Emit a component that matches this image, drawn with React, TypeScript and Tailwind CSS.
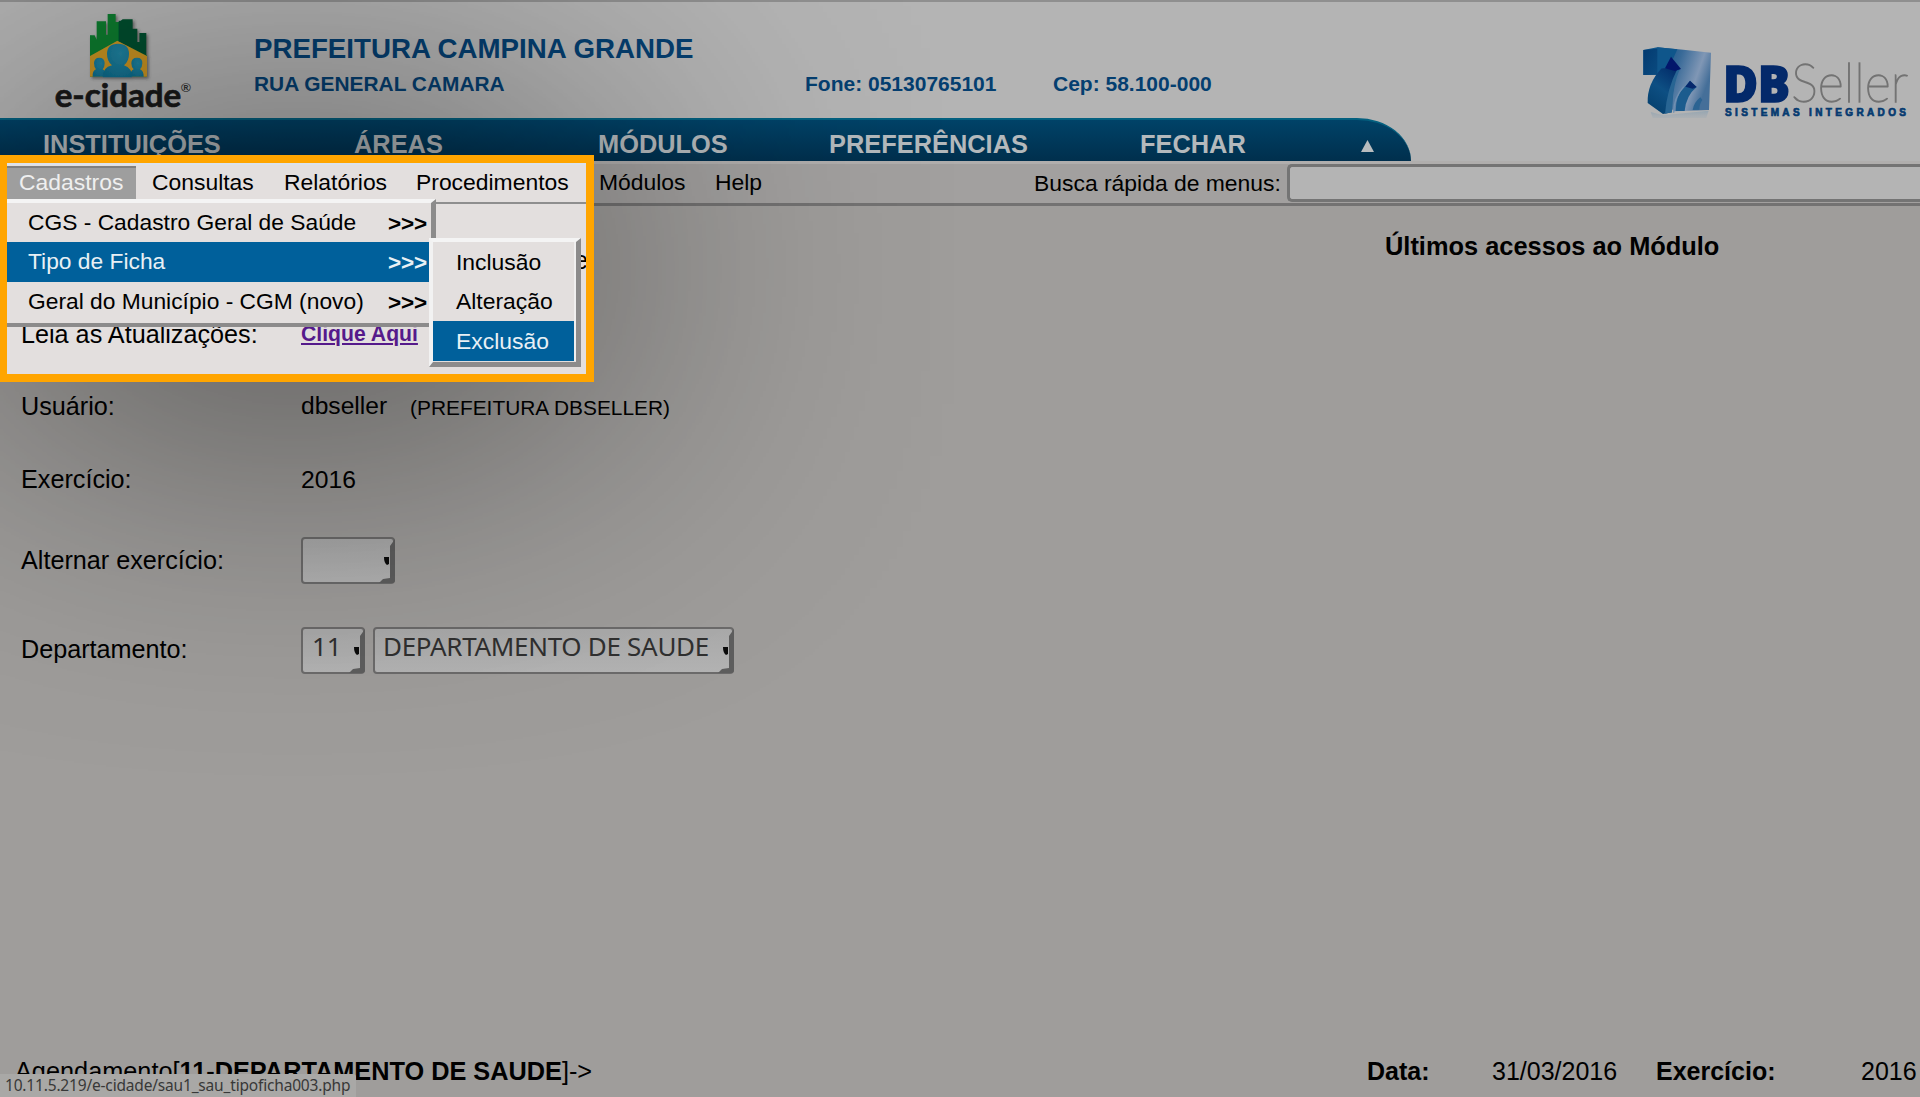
import React from "react";

function CityLogo() {
  return (
    <svg className="h-[118px] w-[170px] shrink-0" viewBox="0 0 510 354">
      <defs>
        <filter id="soft" x="-20%" y="-20%" width="140%" height="140%">
          <feDropShadow dx="5" dy="5" stdDeviation="4" floodColor="#333" floodOpacity="0.6" />
        </filter>
        <radialGradient id="person" cx="60%" cy="30%" r="80%">
          <stop offset="0" stopColor="#2183a0" />
          <stop offset="1" stopColor="#0e6c8c" />
        </radialGradient>
      </defs>
      <g filter="url(#soft)">
        <path d="M150 230V106h14l6 14V64h28v40h5V42h24v24h10v60l84 40v64z" fill="#087a2f" />
        <path d="M236 125V62h6l6-4h30v28h14v40h6V99h21v68z" fill="#034d2e" />
        <path d="M150 168l82-46 89 46v62H150z" fill="#c79222" />
        <g fill="url(#person)">
          <path d="M158 230q-1-18 10-22-6-7-6-18 0-17 16-17t16 17q0 11-6 18 10 4 11 22z" />
          <path d="M270 230q1-18 11-22-7-7-7-18 0-17 17-17t16 17q0 11-7 18 11 4 11 22z" />
          <path d="M188 232q0-30 28-36-15-12-15-34 0-31 33-31t33 31q0 22-15 34 24 8 24 36z" />
        </g>
      </g>
      <text x="44" y="320" textLength="380" lengthAdjust="spacingAndGlyphs" fontSize="97" fontWeight="700" fontFamily="Lato, sans-serif" fill="#191919" stroke="#191919" strokeWidth="2">e-cidade</text>
      <text x="423" y="276" fontSize="40" fontFamily="Liberation Sans, sans-serif" fill="#333">®</text>
    </svg>
  );
}

function SellerLogo() {
  return (
    <svg className="h-[110px] w-[300px] shrink-0" viewBox="0 0 900 330">
      <defs>
        <linearGradient id="face" x1="0" y1="0" x2="1" y2="0.4">
          <stop offset="0" stopColor="#064a80" />
          <stop offset="0.45" stopColor="#396a98" />
          <stop offset="0.8" stopColor="#8097b5" />
          <stop offset="1" stopColor="#456f99" />
        </linearGradient>
        <linearGradient id="swoosh" x1="0.8" y1="0" x2="0.3" y2="1">
          <stop offset="0" stopColor="#032e6b" />
          <stop offset="0.5" stopColor="#0d4f83" />
          <stop offset="1" stopColor="#05406e" />
        </linearGradient>
        <linearGradient id="side" x1="0" y1="0" x2="1" y2="1">
          <stop offset="0" stopColor="#033a70" />
          <stop offset="1" stopColor="#0a4b80" />
        </linearGradient>
        <linearGradient id="mirror" x1="0" y1="0" x2="0" y2="1">
          <stop offset="0" stopColor="#7f9bb0" stopOpacity="0.6" />
          <stop offset="1" stopColor="#b4b4b4" stopOpacity="0" />
        </linearGradient>
      </defs>
      <path d="M92 246l38 10 136-14-10 30-150 14z" fill="url(#mirror)" />
      <path d="M112 52l78 7 83 9-6 172-104 4-60-50 5-60z" fill="url(#face)" />
      <path d="M70 60l42-8 60 6-10 22-30 50-20 4-42 1z" fill="#0f568b" />
      <path d="M70 60l42-4v78l-42 1z" fill="url(#side)" />
      <path d="M110 136l17-21-8 40-20 30z" fill="#b4b4b4" />
      <path d="M125 115h52q-22 50-21 132l-27 5-46-33q-2-58 42-104z" fill="url(#swoosh)" />
      <path d="M172 117q-31 60-37 134l21-4q2-86 25-132z" fill="#286593" />
      <path d="M153 80l30 37-18 6-30-8z" fill="#03166b" />
      <path d="M210 152l20 19q-32 26-36 72h-27q0-50 28-73z" fill="#1c5c8e" />
      <path d="M161 248q0-44 30-78" fill="none" stroke="#7190b2" strokeWidth="4" />
      <path d="M210 152l20 19-12 5-22-6z" fill="#06286c" />
      <path d="M218 240q3-22 23-38l6 8q-9 12-9 29z" fill="#2b6392" />
      <text x="310" y="216" textLength="200" lengthAdjust="spacingAndGlyphs" fontSize="150" fontWeight="800" fontFamily="Open Sans, sans-serif" fill="#03296a" stroke="#03296a" strokeWidth="5">DB</text>
      <text x="514" y="216" textLength="350" lengthAdjust="spacingAndGlyphs" fontSize="160" fontWeight="100" fontFamily="Lato, sans-serif" fill="#737373" stroke="#737373" strokeWidth="4">Seller</text>
      <text x="315" y="259" textLength="543" fontSize="30" fontWeight="700" fontFamily="Liberation Sans, sans-serif" fill="#053a70" stroke="#053a70" strokeWidth="2">SISTEMAS INTEGRADOS</text>
    </svg>
  );
}

function SelectBox({ box, children }: { box: string; children?: React.ReactNode }) {
  return (
    <div className={`${box} relative flex h-[47px] shrink-0 rounded-[4px] border-2 border-[#6c6b6b] bg-gradient-to-b from-[#aaaaaa] to-[#b4b4b4] font-['Noto_Sans',sans-serif] text-[26px] leading-[35px] text-[#303030]`}>
      {children}
      <svg className="absolute -right-[2px] -top-[2px]" width="18" height="47" viewBox="0 0 18 47">
        <path d="M18 2L13 9v32l-7 1-4 4h13q3 0 3-3z" fill="#5e5e5e" />
        <path d="M7 20h5v7l-2 1q-3-2-3-8z" fill="#0a0a0a" />
      </svg>
    </div>
  );
}

const navItems: [string, string][] = [
  ["INSTITUIÇÕES", "w-[311px]"],
  ["ÁREAS", "w-[244px]"],
  ["MÓDULOS", "w-[231px]"],
  ["PREFERÊNCIAS", "w-[311px]"],
  ["FECHAR", "w-[220px]"],
];

function MenuRow({ label, active }: { label: string; active?: boolean }) {
  return (
    <div className={active ? "flex h-[40px] items-center bg-[#00609b] pb-[1px] pl-[22px] text-[#e8f0f5]" : "flex h-[39px] items-center pl-[22px]"}>
      <span className="w-[360px] text-[22.8px]">{label}</span>
      <span className="pt-[3px] text-[22.5px] font-bold tracking-[-0.2px]">&gt;&gt;&gt;</span>
    </div>
  );
}

function SubRow({ label, active }: { label: string; active?: boolean }) {
  return (
    <div className={active ? "flex h-[40px] items-center bg-[#00609b] pl-[23px] text-[#e8f0f5]" : "flex h-[39.5px] items-center pl-[23px]"}>
      {label}
    </div>
  );
}

function Spotlight() {
  return (
    <div className="absolute left-0 top-[155px] h-[227px] w-[594px] overflow-hidden border-8 border-l-[7px] border-[#ffa500] bg-[#e3dfde] text-[22.9px] text-black">
      <div className="flex h-[41px] items-center border-b-2 border-[#8e8e8e] border-t-2 border-t-[#dbe2ec] pb-[3px]">
        <span className="flex h-[33px] w-[129px] items-center border-t-2 border-[#808080] bg-[#9e9e9e] pb-[2px] pl-[12px] text-[#efefef]">Cadastros</span>
        <span className="w-[132px] pl-[16px]">Consultas</span>
        <span className="w-[132px] pl-[16px]">Relatórios</span>
        <span className="pl-[16px]">Procedimentos</span>
      </div>
      <div className="flex h-[68px] items-end justify-end text-[25px] leading-[24px]">
        <span className="-mr-[2px]">e</span>
      </div>
      <div className="mt-[50px] flex items-center leading-[24px]">
        <span className="-ml-px w-[280px] pl-[15px] text-[25.200px]">Leia as Atualizações:</span>
        <span className="pl-[15px] text-[21.2px] font-bold text-[#551a8b] underline decoration-2 underline-offset-2">Clique Aqui</span>
      </div>
      <div className="absolute -left-px top-[36px] h-[128px] w-[430px] border-b-[4px] border-r-[5px] border-t-[4px] border-b-[#8c8b8b] border-r-[#8c8b8b] border-t-[#f4f4f4] bg-[#e3dfde]">
        <MenuRow label="CGS - Cadastro Geral de Saúde" />
        <MenuRow label="Tipo de Ficha" active />
        <MenuRow label="Geral do Município - CGM (novo)" />
      </div>
      <div className="absolute left-[422px] top-[75px] h-[129px] w-[152px] border-4 border-b-[5px] border-r-[5px] border-b-[#8c8b8b] border-l-[#f2f2f2] border-r-[#8c8b8b] border-t-[#f4f4f4] bg-[#e3dfde]">
        <div className="border-r-2 border-[#f0efef]">
          <SubRow label="Inclusão" />
          <SubRow label="Alteração" />
          <SubRow label="Exclusão" active />
        </div>
      </div>
    </div>
  );
}

export default function App() {
  return (
    <div className="relative flex h-[1097px] w-[1920px] flex-col overflow-hidden bg-[#9f9d9b] font-['Liberation_Sans',Arial,sans-serif] text-black">
      <header className="flex h-[118px] shrink-0 border-t-2 border-[#8f8f8f] bg-[#b4b4b4] font-bold text-[#053f70]">
        <div className="-mt-[2px] w-[254px] pl-[40px]">
          <CityLogo />
        </div>
        <div className="flex w-[551px] flex-col pt-[29px]">
          <div className="text-[27.700px] leading-[36px]">PREFEITURA CAMPINA GRANDE</div>
          <div className="pt-[2px] text-[20.900px] leading-[30px]">RUA GENERAL CAMARA</div>
        </div>
        <div className="flex flex-1 pt-[67px] text-[21px] leading-[30px]">
          <div className="w-[248px]">Fone: 05130765101</div>
          <div>Cep: 58.100-000</div>
        </div>
        <div className="mt-[28px]">
          <SellerLogo />
        </div>
      </header>

      <div className="shrink-0 bg-[#b4b4b4]">
        <nav className="flex h-[43px] w-[1411px] items-center rounded-tr-[54px_43px] border-t-2 border-[#04607f] bg-gradient-to-b from-[#004368] to-[#002f4d] pl-[43px] pt-[7px] text-[25.4px] font-bold text-[#b4b9bc]">
          {navItems.map(([label, width]) => (
            <span key={label} className={width}>{label}</span>
          ))}
          <svg width="15" height="12" viewBox="0 0 15 12" className="mt-[4px]">
            <path d="M7.500 0L14 12H1z" fill="#b8bcbe" />
          </svg>
        </nav>
      </div>

      <div className="flex h-[45px] shrink-0 items-center border-b-[3px] border-[#737272] border-t-[3px] border-t-[#b0aead] bg-[#a2a09f] pb-[1px] text-[22.9px]">
        <span className="ml-[599px] -mt-[1px] w-[116px]">Módulos</span>
        <span className="-mt-[1px] w-[319px]">Help</span>
        <span className="mt-[1px] w-[253px]">Busca rápida de menus:</span>
        <div className="h-[38px] flex-1 rounded-l-[5px] border-[3px] border-r-0 border-[#747474] bg-[#b4b4b4]" />
      </div>

      <main className="flex flex-1 text-[25.200px]">
        <div className="flex w-[1385px] flex-col pl-[21px] pt-[164px]">
          <div className="flex h-[73px] items-center">
            <span className="w-[280px]">Usuário:</span>
            <span className="w-[109px] text-[24.6px]">dbseller</span>
            <span className="pt-[2px] text-[20.900px]">(PREFEITURA DBSELLER)</span>
          </div>
          <div className="flex h-[73px] items-center">
            <span className="w-[280px]">Exercício:</span>
            <span className="text-[24.7px]">2016</span>
          </div>
          <div className="flex h-[89px] items-center">
            <span className="w-[280px]">Alternar exercício:</span>
            <SelectBox box="w-[94px]" />
          </div>
          <div className="flex h-[90px] items-center">
            <span className="w-[280px]">Departamento:</span>
            <div className="flex gap-[8px]">
              <SelectBox box="w-[64px] pl-[9px]">11</SelectBox>
              <SelectBox box="w-[361px] pl-[8px]"><span className="whitespace-nowrap tracking-[-0.3px]">DEPARTAMENTO DE SAUDE</span></SelectBox>
            </div>
          </div>
        </div>
        <h2 className="pt-[23px] text-[25.4px] font-bold leading-[34px]">Últimos acessos ao Módulo</h2>
      </main>

      <footer className="flex h-[52px] shrink-0 items-center pl-[16px] text-[25px]">
        <span className="-ml-[1px] w-[1352px] pt-[2px] text-[25.3px]">Agendamento[<b>11-DEPARTAMENTO DE SAUDE</b>]-&gt;</span>
        <b className="w-[125px] pt-[2px]">Data:</b>
        <span className="w-[164px] pt-[2px]">31/03/2016</span>
        <b className="w-[205px] pt-[2px]">Exercício:</b>
        <span className="pt-[2px]">2016</span>
      </footer>

      <div className="absolute bottom-0 left-0 flex h-[23px] w-[356px] items-center whitespace-nowrap rounded-tr-[3px] bg-[#a9a8a6] pl-[5px] font-['Noto_Sans',sans-serif] text-[15.500px] leading-[23px] tracking-[-0.18px] text-[#383838]">
        10.11.5.219/e-cidade/sau1_sau_tipoficha003.php
      </div>

      <div className="absolute left-0 top-[155px] h-[227px] w-[594px] bg-black opacity-70 blur-[180px]" />
      <Spotlight />
    </div>
  );
}
